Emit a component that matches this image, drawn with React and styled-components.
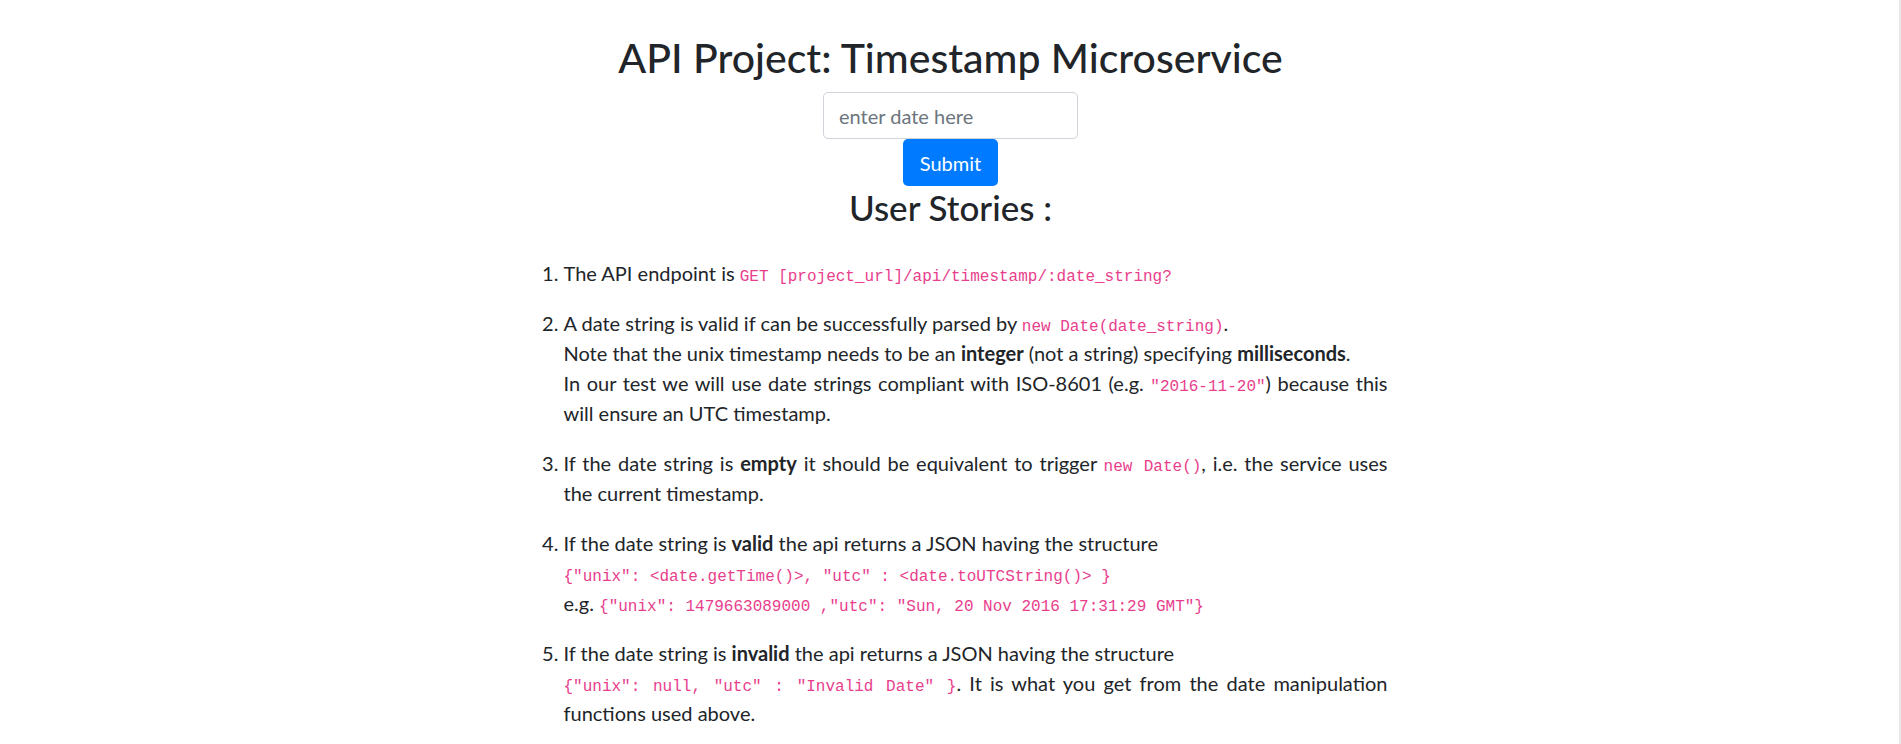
import styled, { createGlobalStyle } from 'styled-components';

const GlobalStyle = createGlobalStyle`
  html,
  body {
    margin: 0;
    padding: 0;
    background: #ffffff;
  }

  body {
    font-family: Lato, 'Noto Sans', sans-serif;
    font-size: 20px;
    line-height: 30px;
    color: #212529;
  }
`;

const Page = styled.main`
  display: flex;
  flex-direction: column;
  align-items: center;
  padding-top: 34px;
`;

const Title = styled.h1`
  margin: 0 0 10px;
  font-size: 41px;
  line-height: 48px;
  font-weight: 500;
`;

const DateForm = styled.form`
  display: flex;
  flex-direction: column;
  align-items: center;
`;

const DateInput = styled.input`
  box-sizing: border-box;
  width: 255px;
  height: 47px;
  padding: 0 15px;
  border: 1px solid #ced4da;
  border-radius: 5px;
  font-family: inherit;
  font-size: 20px;
  color: #495057;
  outline: none;

  &::placeholder {
    color: #6c757d;
  }
`;

const SubmitButton = styled.button`
  box-sizing: border-box;
  width: 95px;
  height: 47px;
  border: none;
  border-radius: 5px;
  background-color: #007bff;
  color: #ffffff;
  font-family: inherit;
  font-size: 20px;
  cursor: pointer;
`;

const SectionTitle = styled.h3`
  margin: 0 0 10px;
  font-size: 35px;
  line-height: 42px;
  font-weight: 500;
`;

const StoryList = styled.ol`
  box-sizing: border-box;
  width: 874px;
  margin: 20px 0 0;
  padding-left: 50px;
  text-align: justify;
`;

const Story = styled.li`
  margin-bottom: 20px;
`;

const Code = styled.code`
  font-family: 'Liberation Mono', 'DejaVu Sans Mono', monospace;
  font-size: 16px;
  line-height: 1;
  color: #e83e8c;
`;

const ScrollTrack = styled.div`
  position: fixed;
  top: 0;
  right: 0;
  width: 2px;
  height: 100vh;
  background: #e8e8e8;
`;

export default function App() {
  return (
    <>
      <GlobalStyle />
      <Page>
        <Title>API Project: Timestamp Microservice</Title>
        <DateForm onSubmit={(e) => e.preventDefault()}>
          <DateInput type="text" placeholder="enter date here" />
          <SubmitButton type="submit">Submit</SubmitButton>
        </DateForm>
        <SectionTitle>User Stories :</SectionTitle>
        <StoryList>
          <Story>
            The API endpoint is <Code>GET [project_url]/api/timestamp/:date_string?</Code>
          </Story>
          <Story>
            A date string is valid if can be successfully parsed by <Code>new Date(date_string)</Code>.
            <br />
            Note that the unix timestamp needs to be an <b>integer</b> (not a string) specifying{' '}
            <b>milliseconds</b>.
            <br />
            In our test we will use date strings compliant with ISO-8601 (e.g.{' '}
            <Code>"2016-11-20"</Code>) because this will ensure an UTC timestamp.
          </Story>
          <Story>
            If the date string is <b>empty</b> it should be equivalent to trigger{' '}
            <Code>new Date()</Code>, i.e. the service uses the current timestamp.
          </Story>
          <Story>
            If the date string is <b>valid</b> the api returns a JSON having the structure
            <br />
            <Code>{'{"unix": <date.getTime()>, "utc" : <date.toUTCString()> }'}</Code>
            <br />
            e.g. <Code>{'{"unix": 1479663089000 ,"utc": "Sun, 20 Nov 2016 17:31:29 GMT"}'}</Code>
          </Story>
          <Story>
            If the date string is <b>invalid</b> the api returns a JSON having the structure
            <br />
            <Code>{'{"unix": null, "utc" : "Invalid Date" }'}</Code>. It is what you get from the
            date manipulation functions used above.
          </Story>
        </StoryList>
      </Page>
      <ScrollTrack />
    </>
  );
}
